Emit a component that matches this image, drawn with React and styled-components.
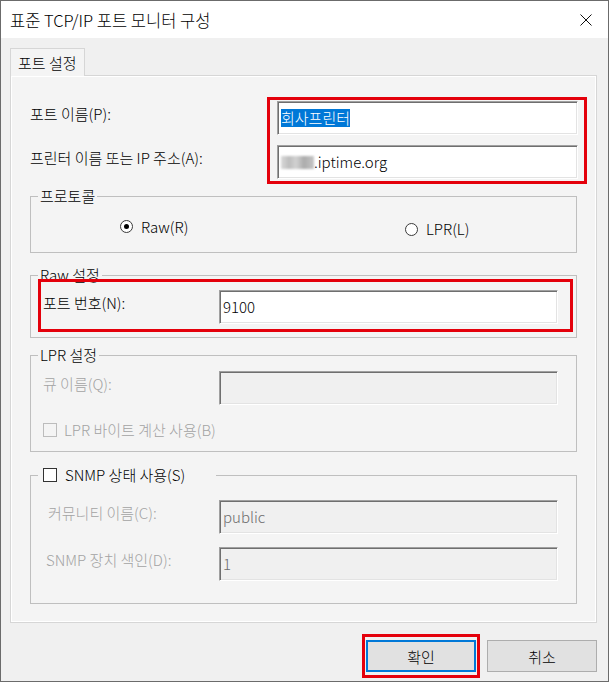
import React from 'react';
import styled, { createGlobalStyle } from 'styled-components';

const GlobalStyle = createGlobalStyle`
  * { box-sizing: border-box; }
  body {
    margin: 0;
    font-family: "Noto Sans CJK KR", "Malgun Gothic", "Liberation Sans", sans-serif;
    font-size: 15px;
    font-weight: 300;
    color: #000;
    background: #fff;
  }
`;

const Window = styled.div`
  width: 609px;
  height: 682px;
  border: 1px solid #6b6b6b;
  background: #f0f0f0;
  display: flex;
  flex-direction: column;
`;

const TitleBar = styled.div`
  height: 37px;
  background: #fff;
  display: flex;
  align-items: center;
  justify-content: space-between;
  padding: 0 16px 0 9px;
  font-size: 16.5px;
  line-height: 18px;
`;

const CloseIcon = () => (
  <svg width="12" height="12" viewBox="0 0 12 12">
    <path d="M0.5 0.5 L11.5 11.5 M11.5 0.5 L0.5 11.5" stroke="#111" strokeWidth="1" fill="none" />
  </svg>
);

const Body = styled.div`
  flex: 1;
  display: flex;
  flex-direction: column;
  padding: 10px 11px 0 9px;
`;

const TabStrip = styled.div`
  display: flex;
`;

const Tab = styled.div`
  height: 28px;
  padding: 0 7px;
  line-height: 27px;
  border: 1px solid #d6d6d6;
  border-bottom: none;
  background: #f4f4f4;
  margin-bottom: -1px;
  position: relative;
  z-index: 1;
`;

const Panel = styled.div`
  border: 1px solid #d6d6d6;
  box-shadow: inset 1px 1px 0 #fff, inset -1px -1px 0 #fff;
  background: #f4f4f4;
  padding: 0 19px 18px;
  display: flex;
  flex-direction: column;
`;

const TopRow = styled.div`
  display: flex;
  margin: 21px -10px 0 0;
`;

const LabelCol = styled.div`
  width: 237px;
  display: flex;
  flex-direction: column;
  gap: 10px;
  padding-top: 4px;
`;

const Label = styled.div`
  height: 34px;
  display: flex;
  align-items: center;
  padding: 0 0 8px ${p => p.$indent || 0}px;
  white-space: nowrap;
  line-height: 18px;
  color: ${p => (p.$disabled ? '#a3a3a3' : '#000')};
`;

const Highlight = styled.div`
  border: 3px solid #e4000b;
  padding: ${p => p.$pad};
  display: flex;
  flex-direction: column;
  gap: 10px;
  flex: ${p => (p.$grow ? 1 : 'none')};
  margin-top: ${p => p.$mt || 0}px;
  position: relative;
  z-index: 2;
`;

const Edit = styled.div`
  height: 34px;
  border: 1px solid;
  border-color: #a0a0a0 #fff #fff #a0a0a0;
  box-shadow: inset 1px 1px 0 #6f6f6f, inset -1px -1px 0 #e3e3e3;
  background: ${p => (p.$disabled ? '#f0f0f0' : '#fff')};
  color: ${p => (p.$disabled ? '#6d6d6d' : '#000')};
  padding-left: 3px;
  display: flex;
  align-items: center;
  line-height: 18px;
  white-space: nowrap;
`;

const Selected = styled.span`
  background: #0078d7;
  color: #fff;
`;

const Mosaic = styled.span`
  display: inline-block;
  width: 33px;
  height: 13px;
  background: linear-gradient(90deg, #d9d9d9 0%, #bdbdbd 25%, #d2d2d2 45%, #acacac 70%, #c6c6c6 100%);
  filter: blur(1.2px);
`;

const Group = styled.fieldset`
  margin: ${p => p.$mt}px 0 0;
  padding: ${p => p.$pt}px 3px ${p => p.$pb}px 7px;
  border: 1px solid #bfbfbf;
  min-width: 0;
`;

const Legend = styled.legend`
  padding: 0 2px;
  line-height: 18px;
  color: #000;
`;

const LegendCheck = styled.span`
  display: inline-flex;
  align-items: center;
  gap: 8px;
  padding-right: 29px;
  vertical-align: top;
`;

const GroupBody = styled.div`
  display: flex;
  flex-direction: column;
  padding: 0 15px 0 5px;
  gap: ${p => p.$gap || 0}px;
`;

const FieldRow = styled.div`
  display: grid;
  grid-template-columns: 176px 1fr;
  height: 34px;
`;

const RadioRow = styled.div`
  display: grid;
  grid-template-columns: 285px auto;
  padding-left: 82px;
  height: 20px;
  align-items: center;
`;

const RadioItem = styled.div`
  display: flex;
  align-items: center;
  gap: 8px;
  line-height: 18px;
  margin-top: ${p => (p.$low ? 5 : 0)}px;
`;

const RadioCircle = styled.span`
  width: 13px;
  height: 13px;
  border-radius: 50%;
  border: 1px solid #3a3a3a;
  background: #fff;
  display: grid;
  place-items: center;
  &::after {
    content: '';
    width: 5px;
    height: 5px;
    border-radius: 50%;
    background: ${p => (p.$checked ? '#000' : 'transparent')};
  }
`;

const CheckRow = styled.div`
  display: flex;
  align-items: center;
  gap: 7px;
  height: 20px;
  margin-top: 15px;
  line-height: 18px;
  color: ${p => (p.$disabled ? '#a3a3a3' : '#000')};
`;

const CheckBox = styled.span`
  width: 14px;
  height: 14px;
  margin-left: ${p => p.$ml || 0}px;
  border: 1px solid ${p => (p.$disabled ? '#bcbcbc' : '#333')};
  background: ${p => (p.$disabled ? '#f4f4f4' : '#fff')};
`;

const ButtonRow = styled.div`
  display: flex;
  justify-content: flex-end;
  align-items: center;
  gap: 7px;
  margin-top: 11px;
`;

const Button = styled.button`
  width: 110px;
  height: 32px;
  font: inherit;
  color: #000;
  background: #e1e1e1;
  border: ${p => (p.$default ? '2px solid #0078d7' : '1px solid #adadad')};
  padding: 0;
`;

const App = () => (
  <>
    <GlobalStyle />
    <Window>
      <TitleBar>
        <span>표준 TCP/IP 포트 모니터 구성</span>
        <CloseIcon />
      </TitleBar>
      <Body>
        <TabStrip>
          <Tab>포트 설정</Tab>
        </TabStrip>
        <Panel>
          <TopRow>
            <LabelCol>
              <Label>포트 이름(P):</Label>
              <Label>프린터 이름 또는 IP 주소(A):</Label>
            </LabelCol>
            <Highlight $grow $pad="1px 6px 2px 7px">
              <Edit><Selected>회사프린터</Selected></Edit>
              <Edit><Mosaic />.iptime.org</Edit>
            </Highlight>
          </TopRow>

          <Group $mt={3} $pt={10} $pb={17}>
            <Legend>프로토콜</Legend>
            <RadioRow>
              <RadioItem><RadioCircle $checked />Raw(R)</RadioItem>
              <RadioItem $low><RadioCircle />LPR(L)</RadioItem>
            </RadioRow>
          </Group>

          <Group $mt={13} $pt={0} $pb={5}>
            <Legend>Raw 설정</Legend>
            <Highlight $mt={-5} $pad="8px 12px 5px 2px">
              <FieldRow>
                <Label>포트 번호(N):</Label>
                <Edit>9100</Edit>
              </FieldRow>
            </Highlight>
          </Group>

          <Group $mt={8} $pt={7} $pb={11}>
            <Legend>LPR 설정</Legend>
            <GroupBody>
              <FieldRow>
                <Label $disabled>큐 이름(Q):</Label>
                <Edit $disabled />
              </FieldRow>
              <CheckRow $disabled>
                <CheckBox $disabled />
                LPR 바이트 계산 사용(B)
              </CheckRow>
            </GroupBody>
          </Group>

          <Group $mt={14} $pt={16} $pb={22}>
            <Legend>
              <LegendCheck>
                <CheckBox $ml={3} />
                SNMP 상태 사용(S)
              </LegendCheck>
            </Legend>
            <GroupBody $gap={13}>
              <FieldRow>
                <Label $disabled $indent={5}>커뮤니티 이름(C):</Label>
                <Edit $disabled>public</Edit>
              </FieldRow>
              <FieldRow>
                <Label $disabled $indent={3}>SNMP 장치 색인(D):</Label>
                <Edit $disabled>1</Edit>
              </FieldRow>
            </GroupBody>
          </Group>
        </Panel>
        <ButtonRow>
          <Highlight $pad="3px 1px">
            <Button $default>확인</Button>
          </Highlight>
          <Button>취소</Button>
        </ButtonRow>
      </Body>
    </Window>
  </>
);

export default App;
